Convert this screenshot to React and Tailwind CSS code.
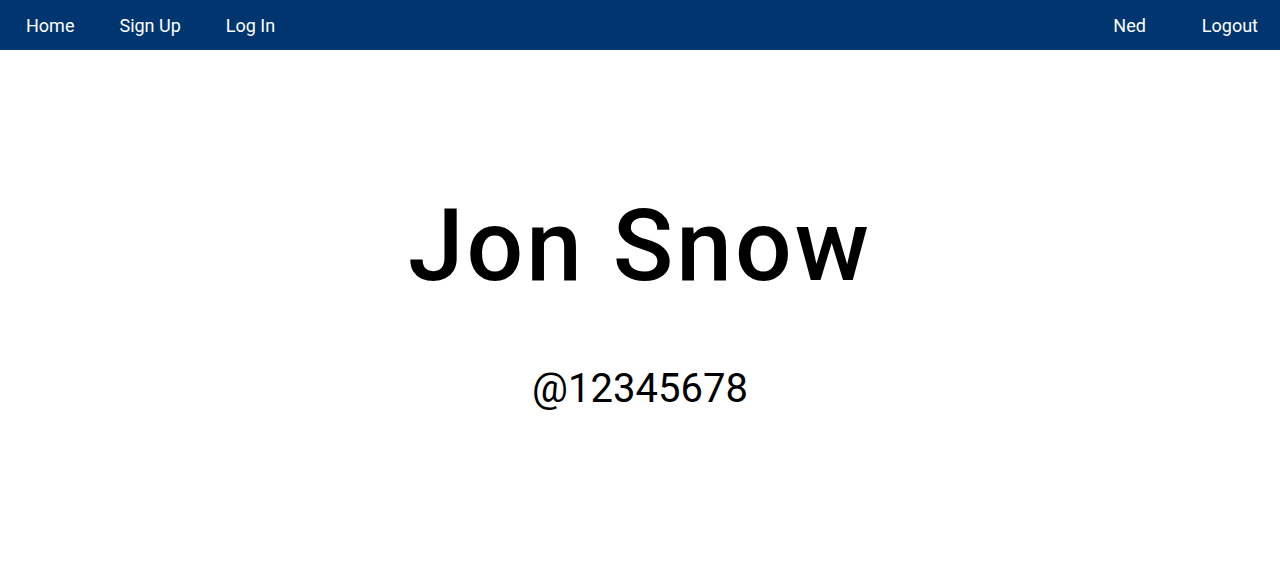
export default function App() {
  return (
    <div className="min-h-[578px] bg-white" style={{ fontFamily: "Roboto, 'Liberation Sans', sans-serif" }}>
      <nav className="h-[50px] bg-[#003670] flex items-center justify-between text-white text-[18px] pl-[26px] pr-[22px]">
        <div className="flex gap-[45px]">
          <a>Home</a>
          <a>Sign Up</a>
          <a>Log In</a>
        </div>
        <div className="flex gap-[56px]">
          <a>Ned</a>
          <a>Logout</a>
        </div>
      </nav>
      <main className="flex flex-col items-center text-black">
        <h1 className="mt-[131px] text-[100px] leading-[130px] font-medium tracking-[3px]">Jon Snow</h1>
        <p className="mt-[53px] text-[40px] leading-[50px]">@12345678</p>
      </main>
    </div>
  );
}
